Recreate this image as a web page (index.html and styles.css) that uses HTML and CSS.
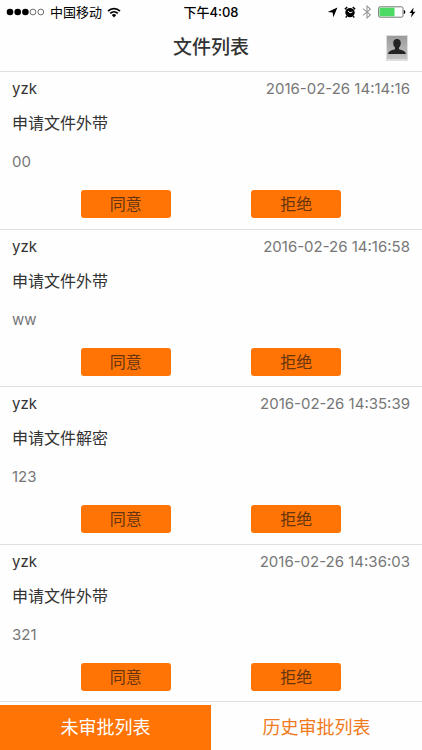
FILE: index.html
```html
<!DOCTYPE html>
<html lang="zh-CN">
<head>
    <meta charset="UTF-8">
    <meta name="viewport" content="width=device-width, initial-scale=1.0">
    <title>文件列表</title>
    <link rel="stylesheet" href="styles.css">
</head>
<body>
    <div class="app">
        <div class="status-bar">
            <div class="status-left">
                <svg class="signal" width="39" height="8" viewBox="0 0 39 8">
                    <circle cx="4" cy="4" r="3.3"/>
                    <circle cx="11.7" cy="4" r="3.3"/>
                    <circle cx="19.4" cy="4" r="3.3"/>
                    <circle class="empty" cx="27" cy="4" r="2.9"/>
                    <circle class="empty" cx="34.8" cy="4" r="2.9"/>
                </svg>
                <span class="carrier">中国移动</span>
                <svg class="wifi" width="14" height="11" viewBox="0 0 14 11">
                    <path class="wave" d="M1 4.1C4.4.7 9.6.7 13 4.1M3.2 6.4c2.2-2.1 5.4-2.1 7.6 0"/>
                    <path d="M4.8 8c1.3-1.2 3.1-1.2 4.4 0L7 10.4z"/>
                </svg>
            </div>
            <div class="clock">下午4:08</div>
            <div class="status-right">
                <svg width="11" height="11" viewBox="0 0 11 11">
                    <path d="M10.4.6L6.4 10.2 5.6 5.6.7 5z"/>
                </svg>
                <svg width="12" height="12" viewBox="0 0 12 12">
                    <circle cx="6" cy="6.6" r="4.7"/>
                    <path class="bell" d="M.9 3.2L3.2 1M11.1 3.2L8.8 1M2.8 10.2l-1 1.2M9.2 10.2l1 1.2"/>
                    <path class="hands" d="M4 5l2 1.8L8.4 6"/>
                </svg>
                <svg width="10" height="14" viewBox="0 0 10 14">
                    <path class="bluetooth" d="M1 3.7l7.4 6.1L5 13V1l3.4 3.2L1 10.3"/>
                </svg>
                <svg width="28" height="12" viewBox="0 0 28 12">
                    <rect class="case" x=".6" y=".8" width="24.4" height="10.4" rx="1.5"/>
                    <rect class="level" x="1.5" y="1.7" width="15" height="8.6"/>
                    <path d="M25.8 4c2 .6 2 3.4 0 4z"/>
                </svg>
                <svg class="bolt" width="7" height="11" viewBox="0 0 7 11">
                    <path d="M4.6.6L.5 6.1h2.4L2 10.5l4.4-5.8H3.9z"/>
                </svg>
            </div>
        </div>

        <header class="header">
            <h1>文件列表</h1>
            <button class="profile-btn" aria-label="个人中心">
                <svg width="22" height="26" viewBox="0 0 22 26">
                    <defs>
                        <linearGradient id="photo" x1="0" y1="0" x2="0" y2="1">
                            <stop offset="0" stop-color="#9b9b9b"/>
                            <stop offset="1" stop-color="#c4c4c4"/>
                        </linearGradient>
                    </defs>
                    <rect width="22" height="26" fill="#dedede"/>
                    <rect x="1" y="1" width="20" height="23" fill="url(#photo)"/>
                    <path fill="#252525" d="M11 4c2.6 0 3.9 1.7 3.8 4.3-.1 2-.8 3.2-1.8 4.2v1.6c1.4 1.2 6.4 1.1 7 5H2c.6-3.9 5.6-3.8 7-5v-1.6c-1-1-1.7-2.2-1.8-4.2C7.1 5.7 8.4 4 11 4z"/>
                </svg>
            </button>
        </header>

        <main class="list">
            <article class="item">
                <div class="item-top">
                    <span class="name">yzk</span>
                    <time>2016-02-26 14:14:16</time>
                </div>
                <h2>申请文件外带</h2>
                <p>00</p>
                <div class="actions">
                    <button class="btn">同意</button>
                    <button class="btn">拒绝</button>
                </div>
            </article>
            <article class="item">
                <div class="item-top">
                    <span class="name">yzk</span>
                    <time>2016-02-26 14:16:58</time>
                </div>
                <h2>申请文件外带</h2>
                <p>ww</p>
                <div class="actions">
                    <button class="btn">同意</button>
                    <button class="btn">拒绝</button>
                </div>
            </article>
            <article class="item">
                <div class="item-top">
                    <span class="name">yzk</span>
                    <time>2016-02-26 14:35:39</time>
                </div>
                <h2>申请文件解密</h2>
                <p>123</p>
                <div class="actions">
                    <button class="btn">同意</button>
                    <button class="btn">拒绝</button>
                </div>
            </article>
            <article class="item">
                <div class="item-top">
                    <span class="name">yzk</span>
                    <time>2016-02-26 14:36:03</time>
                </div>
                <h2>申请文件外带</h2>
                <p>321</p>
                <div class="actions">
                    <button class="btn">同意</button>
                    <button class="btn">拒绝</button>
                </div>
            </article>
        </main>

        <nav class="tabs">
            <button class="tab active">未审批列表</button>
            <button class="tab">历史审批列表</button>
        </nav>
    </div>
</body>
</html>
```
FILE: styles.css
```css
* {
    margin: 0;
    padding: 0;
    box-sizing: border-box;
}

body {
    font-family: Inter, "Noto Sans CJK SC", sans-serif;
    background: #fefefe;
    color: #333;
}

button {
    border: none;
    background: none;
    font-family: inherit;
    cursor: pointer;
}

svg {
    display: block;
}

.app {
    min-height: 100vh;
    display: flex;
    flex-direction: column;
}

/* Status bar */
.status-bar {
    height: 24px;
    padding: 0 6px;
    display: grid;
    grid-template-columns: 1fr auto 1fr;
    align-items: center;
    font-size: 13px;
    line-height: 24px;
    color: #000;
}

.status-left,
.status-right {
    display: flex;
    align-items: center;
}

.status-left {
    gap: 5px;
}

.status-right {
    justify-content: flex-end;
    gap: 6px;
}

.clock {
    font-weight: 500;
}

.signal .empty {
    fill: none;
    stroke: #333;
    stroke-width: 0.7;
}

.wifi .wave {
    fill: none;
    stroke: #000;
    stroke-width: 1.7;
}

.bell {
    fill: none;
    stroke: #000;
    stroke-width: 1.5;
}

.hands {
    fill: none;
    stroke: #fff;
    stroke-width: 1;
}

.bluetooth {
    fill: none;
    stroke: #999;
    stroke-width: 1.1;
}

.case {
    fill: #fff;
    stroke: #555;
    stroke-width: 0.8;
}

.level {
    fill: #4cd964;
}

.bolt {
    margin-left: -3px;
}

/* Title */
.header {
    height: 48px;
    padding: 0 14px;
    display: grid;
    grid-template-columns: 1fr auto 1fr;
    align-items: center;
    border-bottom: 1px solid #e0e0e0;
}

.header h1 {
    grid-column: 2;
    font-size: 19px;
    font-weight: 500;
    line-height: 24px;
}

.profile-btn {
    justify-self: end;
}

/* File list */
.list {
    flex: 1;
    display: flex;
    flex-direction: column;
}

.item {
    flex: 1;
    padding: 5px 12px 10px;
    border-bottom: 1px solid #e0e0e0;
}

.item-top {
    display: flex;
    justify-content: space-between;
    font-size: 15px;
    line-height: 24px;
}

.item time {
    color: #777;
}

.item h2 {
    margin-top: 10px;
    font-size: 16px;
    font-weight: 400;
    line-height: 24px;
}

.item p {
    margin-top: 15px;
    font-size: 15px;
    line-height: 24px;
    color: #777;
}

.actions {
    margin: 16px -12px 0;
    display: flex;
    justify-content: space-evenly;
}

.btn {
    width: 90px;
    height: 28px;
    border-radius: 3px;
    background: #ff7404;
    color: #663410;
    font-size: 16px;
    line-height: 28px;
}

/* Bottom tabs */
.tabs {
    margin-top: 3px;
    display: flex;
}

.tab {
    flex: 1;
    height: 45px;
    color: #f07a1c;
    font-size: 18px;
    line-height: 45px;
}

.tab.active {
    background: #ff7404;
    color: #fff;
}
```
